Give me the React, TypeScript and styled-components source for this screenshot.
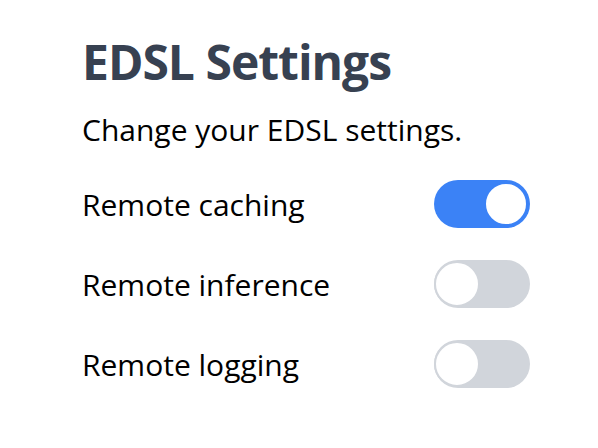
import React, { useState } from "react";
import styled, { createGlobalStyle } from "styled-components";

const GlobalStyle = createGlobalStyle`
  html, body {
    margin: 0;
    padding: 0;
    background: #ffffff;
  }
  body {
    font-family: "Open Sans", "Noto Sans", "Liberation Sans", sans-serif;
  }
`;

const Page = styled.div`
  width: 598px;
  height: 448px;
  box-sizing: border-box;
  padding: 38px 0 0 82px;
  background: #ffffff;
`;

const Panel = styled.section`
  width: 448px;
  display: flex;
  flex-direction: column;
`;

const Title = styled.h1`
  margin: 0;
  font-size: 48px;
  line-height: 48px;
  font-weight: 700;
  letter-spacing: -1px;
  color: #374151;
`;

const Subtitle = styled.p`
  margin: 24px 0 0;
  font-size: 30px;
  line-height: 40px;
  color: #000000;
`;

const List = styled.div`
  margin-top: 30px;
  display: flex;
  flex-direction: column;
  gap: 32px;
`;

const Row = styled.label`
  display: flex;
  align-items: center;
  justify-content: space-between;
  height: 48px;
  cursor: pointer;
`;

const Label = styled.span`
  font-size: 30px;
  line-height: 40px;
  color: #000000;
  padding-top: 2px;
`;

const Track = styled.span<{ $on: boolean }>`
  position: relative;
  display: inline-block;
  width: 96px;
  height: 48px;
  border-radius: 24px;
  background: ${(p) => (p.$on ? "#3b82f6" : "#d1d5db")};
`;

const Knob = styled.span<{ $on: boolean }>`
  position: absolute;
  top: ${(p) => (p.$on ? "2px" : "1px")};
  left: ${(p) => (p.$on ? "50px" : "0px")};
  width: ${(p) => (p.$on ? "44px" : "46px")};
  height: ${(p) => (p.$on ? "44px" : "46px")};
  box-sizing: border-box;
  border-radius: 50%;
  background: #ffffff;
  border: 2px solid ${(p) => (p.$on ? "#3b82f6" : "#d1d5db")};
`;

const HiddenInput = styled.input`
  position: absolute;
  opacity: 0;
  width: 0;
  height: 0;
`;

type Setting = { key: string; label: string; on: boolean };

export default function App() {
  const [settings, setSettings] = useState<Setting[]>([
    { key: "caching", label: "Remote caching", on: true },
    { key: "inference", label: "Remote inference", on: false },
    { key: "logging", label: "Remote logging", on: false },
  ]);

  const toggle = (key: string) =>
    setSettings((s) => s.map((x) => (x.key === key ? { ...x, on: !x.on } : x)));

  return (
    <>
      <GlobalStyle />
      <Page>
        <Panel>
          <Title>EDSL Settings</Title>
          <Subtitle>Change your EDSL settings.</Subtitle>
          <List>
            {settings.map((s) => (
              <Row key={s.key}>
                <Label>{s.label}</Label>
                <HiddenInput
                  type="checkbox"
                  checked={s.on}
                  onChange={() => toggle(s.key)}
                />
                <Track $on={s.on}>
                  <Knob $on={s.on} />
                </Track>
              </Row>
            ))}
          </List>
        </Panel>
      </Page>
    </>
  );
}
